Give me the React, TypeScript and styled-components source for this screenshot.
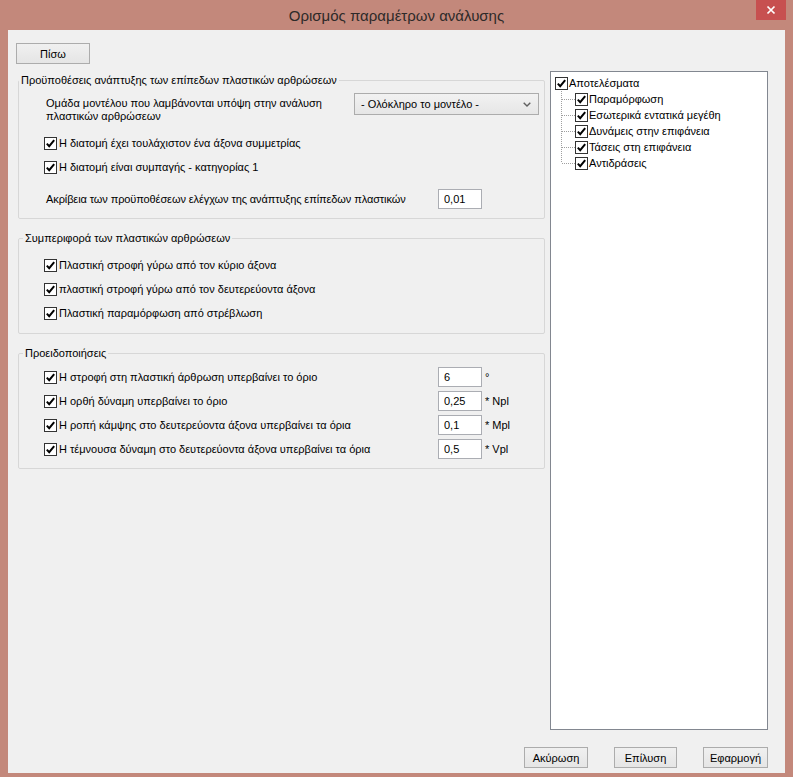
import React from "react";
import styled, { createGlobalStyle } from "styled-components";

const GlobalStyle = createGlobalStyle`
  html, body { margin: 0; padding: 0; }
  body {
    width: 793px; height: 777px; overflow: hidden;
    background: #c3887b;
    font-family: "Liberation Sans", Arial, sans-serif;
    font-size: 11px; color: #000;
  }
  * { box-sizing: border-box; }
`;

const Window = styled.div`
  width: 793px;
  height: 777px;
  background: #c3887b;
  display: flex;
  flex-direction: column;
`;

const TitleBar = styled.div`
  height: 30px;
  flex: none;
  display: grid;
  grid-template-columns: 1fr auto 1fr;
  align-items: start;
`;

const Title = styled.div`
  grid-column: 2;
  font-family: "Liberation Sans", Arial, sans-serif;
  font-size: 15px;
  line-height: 20px;
  margin-top: 6px;
  color: #2e2a29;
`;

const CloseButton = styled.div`
  grid-column: 3;
  justify-self: end;
  width: 30px;
  height: 20px;
  margin-right: 7px;
  background: #c75050;
  display: flex;
  align-items: center;
  justify-content: center;
`;

const Client = styled.div`
  flex: 1;
  margin: 0 8px 4px 8px;
  background: #f0f0f0;
  display: flex;
  flex-direction: column;
  padding: 13px 17px 0 8px;
`;

const Button = styled.button<{ $w: number }>`
  width: ${(p) => p.$w}px;
  height: 21px;
  flex: none;
  padding: 0;
  border: 1px solid #acacac;
  background: linear-gradient(#f0f0f0, #e5e5e5);
  font-family: "Liberation Sans", Arial, sans-serif;
  font-size: 11px;
  color: #000;
  display: flex;
  align-items: center;
  justify-content: center;
`;

const Body = styled.div`
  margin-top: 7px;
  height: 659px;
  flex: none;
  display: flex;
  gap: 5px;
  padding-left: 2px;
`;

const LeftColumn = styled.div`
  width: 527px;
  flex: none;
  display: flex;
  flex-direction: column;
  gap: 12px;
  padding-top: 2px;
`;

const Group = styled.fieldset<{ $pt: number; $pb: number }>`
  margin: 0;
  min-width: 0;
  padding: ${(p) => p.$pt}px 0 ${(p) => p.$pb}px 0;
  border: 1px solid #d7d7d7;
  border-radius: 2px;
`;

const Legend = styled.legend<{ $ml: number }>`
  margin-left: ${(p) => p.$ml}px;
  padding: 0 2px;
  font-size: 11px;
  line-height: 14px;
`;

const ModelRow = styled.div`
  display: grid;
  grid-template-columns: 308px 185px;
  padding-left: 27px;
  height: 30px;
  margin-bottom: 8px;
`;

const MultiLabel = styled.div`
  padding-top: 4px;
  line-height: 13px;
  white-space: nowrap;
`;

const Select = styled.div`
  height: 22px;
  border: 1px solid #acacac;
  background: linear-gradient(#f2f2f2, #e6e6e6);
  display: flex;
  align-items: center;
  justify-content: space-between;
  padding: 0 7px 0 6px;
  white-space: nowrap;
`;

const CheckRow = styled.div`
  height: 24px;
  display: flex;
  align-items: center;
  gap: 2px;
  padding-left: 25px;
  white-space: nowrap;
`;

const ValueRow = styled.div<{ $mt: number }>`
  margin-top: ${(p) => p.$mt}px;
  height: 20px;
  display: grid;
  grid-template-columns: 392px 44px;
  align-items: center;
  padding-left: 27px;
  white-space: nowrap;
  letter-spacing: -0.1px;
`;

const WarnRow = styled.div`
  height: 24px;
  display: grid;
  grid-template-columns: 394px 44px auto;
  align-items: center;
  padding-left: 25px;
  white-space: nowrap;
`;

const WarnLabel = styled.div`
  display: flex;
  align-items: center;
  gap: 2px;
`;

const Field = styled.input`
  width: 44px;
  height: 20px;
  border: 1px solid #abadb3;
  background: #fff;
  padding: 0 0 0 5px;
  margin: 0;
  font-family: "Liberation Sans", Arial, sans-serif;
  font-size: 11px;
  letter-spacing: 0;
  color: #000;
  outline: none;
`;

const Unit = styled.span`
  margin-left: 3px;
  font-size: 11px;
`;

const Tree = styled.div`
  width: 218px;
  height: 659px;
  flex: none;
  border: 1px solid #828790;
  background: #fff;
  padding: 3px 0 0 4px;
`;

const TreeRow = styled.div`
  height: 16px;
  display: flex;
  align-items: center;
  white-space: nowrap;
`;

const TreeLabel = styled.span`
  margin-left: 1px;
`;

const Box = styled.span`
  width: 13px;
  height: 13px;
  flex: none;
  border: 1px solid #333;
  background: #fff;
  display: inline-flex;
  align-items: center;
  justify-content: center;
`;

const Footer = styled.div`
  margin-top: 17px;
  display: flex;
  justify-content: flex-end;
  gap: 26px;
`;

const Check = () => (
  <Box>
    <svg width="11" height="11" viewBox="0 0 11 11">
      <path d="M1.8 5.6 L4.2 8.2 L9.2 2.2" fill="none" stroke="#000" strokeWidth="2" />
    </svg>
  </Box>
);

const Connector = ({ last }: { last?: boolean }) => (
  <svg width="20" height="16" viewBox="0 0 20 16" style={{ flex: "none" }} shapeRendering="crispEdges">
    <line x1="6.5" y1="0" x2="6.5" y2={last ? 8 : 16} stroke="#a0a0a0" strokeDasharray="1 1" />
    <line x1="7" y1="8.5" x2="20" y2="8.5" stroke="#a0a0a0" strokeDasharray="1 1" />
  </svg>
);

const treeChildren = [
  "Παραμόρφωση",
  "Εσωτερικά εντατικά μεγέθη",
  "Δυνάμεις στην επιφάνεια",
  "Τάσεις στη επιφάνεια",
  "Αντιδράσεις",
];

const warnings = [
  { text: "Η στροφή στη πλαστική άρθρωση υπερβαίνει το όριο", value: "6", unit: "°" },
  { text: "Η ορθή δύναμη υπερβαίνει το όριο", value: "0,25", unit: "* Npl" },
  { text: "Η ροπή κάμψης στο δευτερεύοντα άξονα υπερβαίνει τα όρια", value: "0,1", unit: "* Mpl" },
  { text: "Η τέμνουσα δύναμη στο δευτερεύοντα άξονα υπερβαίνει τα όρια", value: "0,5", unit: "* Vpl" },
];

export default function App() {
  return (
    <>
      <GlobalStyle />
      <Window>
        <TitleBar>
          <Title>Ορισμός παραμέτρων ανάλυσης</Title>
          <CloseButton>
            <svg width="10" height="10" viewBox="0 0 10 10">
              <path d="M1.5 1.5 L8.5 8.5 M8.5 1.5 L1.5 8.5" stroke="#fff" strokeWidth="1.7" />
            </svg>
          </CloseButton>
        </TitleBar>
        <Client>
          <Button $w={74}>Πίσω</Button>
          <Body>
            <LeftColumn>
              <Group $pt={6} $pb={9}>
                <Legend $ml={0}>Προϋποθέσεις ανάπτυξης των επίπεδων πλαστικών αρθρώσεων</Legend>
                <ModelRow>
                  <MultiLabel>
                    Ομάδα μοντέλου που λαμβάνονται υπόψη στην ανάλυση
                    <br />
                    πλαστικών αρθρώσεων
                  </MultiLabel>
                  <Select>
                    <span>- Ολόκληρο το μοντέλο -</span>
                    <svg width="8" height="5" viewBox="0 0 8 5">
                      <path d="M0.7 0.7 L4 4 L7.3 0.7" fill="none" stroke="#606060" strokeWidth="1.4" />
                    </svg>
                  </Select>
                </ModelRow>
                <CheckRow>
                  <Check />
                  <span>Η διατομή έχει τουλάχιστον ένα άξονα συμμετρίας</span>
                </CheckRow>
                <CheckRow>
                  <Check />
                  <span>Η διατομή είναι συμπαγής - κατηγορίας 1</span>
                </CheckRow>
                <ValueRow $mt={10}>
                  <span>Ακρίβεια των προϋποθέσεων ελέγχων της ανάπτυξης επίπεδων πλαστικών</span>
                  <Field readOnly value="0,01" />
                </ValueRow>
              </Group>
              <Group $pt={8} $pb={8}>
                <Legend $ml={4}>Συμπεριφορά των πλαστικών αρθρώσεων</Legend>
                <CheckRow>
                  <Check />
                  <span>Πλαστική στροφή γύρω από τον κύριο άξονα</span>
                </CheckRow>
                <CheckRow>
                  <Check />
                  <span>πλαστική στροφή γύρω από τον δευτερεύοντα άξονα</span>
                </CheckRow>
                <CheckRow>
                  <Check />
                  <span>Πλαστική παραμόρφωση από στρέβλωση</span>
                </CheckRow>
              </Group>
              <Group $pt={5} $pb={7}>
                <Legend $ml={4}>Προειδοποιήσεις</Legend>
                {warnings.map((w) => (
                  <WarnRow key={w.text}>
                    <WarnLabel>
                      <Check />
                      <span>{w.text}</span>
                    </WarnLabel>
                    <Field readOnly value={w.value} />
                    <Unit>{w.unit}</Unit>
                  </WarnRow>
                ))}
              </Group>
            </LeftColumn>
            <Tree>
              <TreeRow>
                <Check />
                <TreeLabel>Αποτελέσματα</TreeLabel>
              </TreeRow>
              {treeChildren.map((c, i) => (
                <TreeRow key={c}>
                  <Connector last={i === treeChildren.length - 1} />
                  <Check />
                  <TreeLabel>{c}</TreeLabel>
                </TreeRow>
              ))}
            </Tree>
          </Body>
          <Footer>
            <Button $w={64}>Ακύρωση</Button>
            <Button $w={63}>Επίλυση</Button>
            <Button $w={65}>Εφαρμογή</Button>
          </Footer>
        </Client>
      </Window>
    </>
  );
}
